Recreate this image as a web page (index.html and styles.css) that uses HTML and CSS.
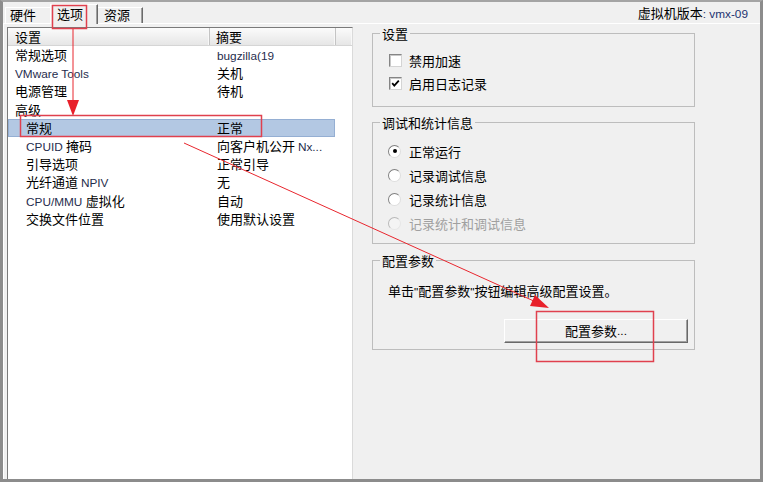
FILE: index.html
```html
<!DOCTYPE html>
<html lang="zh-CN">
<head>
<meta charset="utf-8">
<title>虚拟机设置 - 选项</title>
<link rel="stylesheet" href="styles.css">
</head>
<body>
<div class="window">
  <div class="tabbar">
    <div class="tab t1">硬件</div>
    <div class="tab sel">选项</div>
    <div class="tab t3">资源</div>
    <div class="version">虚拟机版本<span class="lat ver">: vmx-09</span></div>
  </div>
  <div class="page">
    <div class="list">
      <div class="lhead">
        <div class="hc c1">设置</div>
        <div class="hc c2">摘要</div>
        <div class="hc c3"></div>
      </div>
      <div class="row"><div class="c1 l1">常规选项</div><div class="c2"><span class="lat">bugzilla(19</span></div></div>
      <div class="row"><div class="c1 l1"><span class="lat">VMware Tools</span></div><div class="c2">关机</div></div>
      <div class="row"><div class="c1 l1">电源管理</div><div class="c2">待机</div></div>
      <div class="row"><div class="c1 l1">高级</div><div class="c2"></div></div>
      <div class="row selrow"><div class="c1 l2">常规</div><div class="c2">正常</div></div>
      <div class="row"><div class="c1 l2"><span class="lat">CPUID </span>掩码</div><div class="c2">向客户机公开 <span class="lat">Nx...</span></div></div>
      <div class="row"><div class="c1 l2">引导选项</div><div class="c2">正常引导</div></div>
      <div class="row"><div class="c1 l2">光纤通道 <span class="lat">NPIV</span></div><div class="c2">无</div></div>
      <div class="row"><div class="c1 l2"><span class="lat">CPU/MMU </span>虚拟化</div><div class="c2">自动</div></div>
      <div class="row"><div class="c1 l2">交换文件位置</div><div class="c2">使用默认设置</div></div>
    </div>
    <div class="right">
      <fieldset class="group g1">
        <legend>设置</legend>
        <div class="gbody b1">
          <div class="opt"><span class="cb"></span>禁用加速</div>
          <div class="opt"><span class="cb"><svg width="11" height="11" viewBox="0 0 11 11"><path d="M2.2 5.2 L4.3 7.6 L8.8 2.6" fill="none" stroke="#000" stroke-width="1.8"/></svg></span>启用日志记录</div>
        </div>
      </fieldset>
      <fieldset class="group g2">
        <legend>调试和统计信息</legend>
        <div class="gbody b2">
          <div class="opt"><span class="rb"><span class="dot"></span></span>正常运行</div>
          <div class="opt"><span class="rb"></span>记录调试信息</div>
          <div class="opt"><span class="rb"></span>记录统计信息</div>
          <div class="opt dis"><span class="rb"></span>记录统计和调试信息</div>
        </div>
      </fieldset>
      <fieldset class="group g3">
        <legend>配置参数</legend>
        <div class="gbody b3">
          <div class="desc">单击<span class="lat q">"</span>配置参数<span class="lat q">"</span>按钮编辑高级配置设置。</div>
          <div class="btnrow"><div class="btn">配置参数<span class="lat dots">...</span></div></div>
        </div>
      </fieldset>
    </div>
  </div>
  <svg class="annot" width="763" height="482" viewBox="0 0 763 482">
    <rect x="52.5" y="5.5" width="34" height="23" fill="none" stroke="#e0404e" stroke-width="1.5"/>
    <line x1="73" y1="29" x2="73" y2="101" stroke="#e8262e" stroke-width="1"/>
    <polygon points="67,100 79,100 73,116" fill="#e8202a"/>
    <rect x="20.5" y="115.5" width="241" height="21" fill="none" stroke="#e0404e" stroke-width="1.5"/>
    <line x1="184" y1="143" x2="536" y2="302" stroke="#e8262e" stroke-width="1"/>
    <polygon points="549,308 530,306 535,295" fill="#e8202a"/>
    <rect x="536.5" y="311.5" width="117" height="50" fill="none" stroke="#e0404e" stroke-width="1.5"/>
  </svg>
</div>
</body>
</html>
```

FILE: styles.css
```css
html, body {
  margin: 0;
  padding: 0;
}

body {
  width: 763px;
  height: 482px;
  overflow: hidden;
  font-family: "Noto Sans CJK SC", sans-serif;
  font-size: 13px;
  color: #000;
  background: #f0f0f0;
}

.window {
  position: relative;
  width: 763px;
  height: 482px;
  box-sizing: border-box;
  border: 3px solid #8c8c8c;
  border-top: 2px solid #a4a4a4;
  background: #f0f0f0;
  display: flex;
  flex-direction: column;
}

.lat {
  font-family: "Liberation Sans", sans-serif;
  font-size: 11.8px;
  color: #1f2d4d;
}

/* tabs */
.tabbar {
  height: 21px;
  flex: none;
  display: flex;
  align-items: flex-end;
  padding-left: 2px;
  position: relative;
  z-index: 1;
}

.tab {
  position: relative;
  box-sizing: border-box;
  height: 16px;
  line-height: 14px;
  border-top: 1px solid #fff;
  border-left: 1px solid #fff;
  border-right: 1px solid #6a6a6a;
  box-shadow: inset -1px 0 #a0a0a0;
  padding-left: 4px;
  background: #f0f0f0;
  white-space: nowrap;
}

.t1 {
  width: 47px;
  box-shadow: none;
  border-right: none;
}

.sel {
  z-index: 2;
  width: 48px;
  height: 20px;
  line-height: 18px;
  margin-left: -2px;
  margin-bottom: -1px;
  padding-left: 6px;
}

.t3 {
  width: 46px;
  margin-left: -1px;
  padding-left: 6px;
}

.version {
  margin-left: auto;
  margin-bottom: 2px;
  padding-right: 12px;
  line-height: 14px;
  white-space: nowrap;
}

.ver {
  color: #1d3370;
}

/* page */
.page {
  flex: 1;
  min-height: 0;
  display: flex;
  border-top: 1px solid #fff;
  border-left: 1px solid #fff;
  padding-left: 3px;
}

.list {
  width: 346px;
  flex: none;
  box-sizing: border-box;
  margin-top: 3px;
  background: #fff;
  border-left: 1px solid #7a7a7a;
  border-top: 1px solid #7a7a7a;
  border-right: 1px solid #dadada;
}

.lhead {
  display: flex;
  height: 18px;
  box-sizing: border-box;
  border-bottom: 1px solid #d5d5d5;
  background: linear-gradient(#fbfbfb, #e6e6e6);
}

.hc {
  box-sizing: border-box;
  line-height: 17px;
  border-right: 1px solid #c4c4c4;
  box-shadow: inset -1px 0 #f8f8f8;
}

.lhead .c1 {
  padding-left: 7px;
}

.lhead .c2 {
  padding-left: 6px;
}

.c1 {
  width: 202px;
  flex: none;
  box-sizing: border-box;
  white-space: nowrap;
}

.c2 {
  width: 126px;
  flex: none;
  box-sizing: border-box;
  padding-left: 7px;
  white-space: nowrap;
}

.c3 {
  flex: 1;
  border-right: none;
}

.row {
  display: flex;
  height: 18.2px;
  line-height: 18px;
}

.l1 {
  padding-left: 7px;
}

.l2 {
  padding-left: 18px;
}

.selrow {
  width: 327px;
  background: #b3c8e3;
  box-shadow: inset 0 0 0 1px #95afd3;
}

/* right side */
.right {
  flex: 1;
  padding-left: 19px;
  padding-top: 2px;
}

.group {
  width: 323px;
  box-sizing: border-box;
  margin: 0;
  padding: 0;
  min-width: 0;
  border: 1px solid #bdbdbd;
}

.group legend {
  margin-left: 7px;
  padding: 0 2px;
  line-height: 15px;
}

.g2 {
  margin-top: 8px;
}

.g3 {
  margin-top: 9px;
}

.b1 {
  padding: 8px 0 11px 16px;
}

.b1 .opt {
  height: 23px;
}

.b2 {
  padding: 9px 0 8px 15px;
}

.b2 .opt {
  height: 24px;
}

.opt {
  display: flex;
  align-items: center;
}

.cb {
  width: 13px;
  height: 13px;
  flex: none;
  box-sizing: border-box;
  background: #fff;
  border: 1px solid;
  border-color: #858585 #d4d4d4 #d4d4d4 #858585;
  box-shadow: inset 1px 1px #c8c8c8;
  margin-right: 7px;
  display: flex;
}

.rb {
  width: 13px;
  height: 13px;
  flex: none;
  box-sizing: border-box;
  border-radius: 50%;
  background: #fff;
  border: 1px solid;
  border-color: #808080 #dedede #dedede #808080;
  margin-right: 8px;
  display: flex;
  align-items: center;
  justify-content: center;
}

.dot {
  width: 4px;
  height: 4px;
  border-radius: 50%;
  background: #000;
}

.dis {
  color: #a0a0a0;
}

.dis .rb {
  border-color: #b8b8b8 #e6e6e6 #e6e6e6 #b8b8b8;
  background: #f4f4f4;
}

.b3 {
  padding: 16px 6px 6px 15px;
}

.desc {
  line-height: 14px;
  white-space: nowrap;
}

.q {
  color: #000;
}

.btnrow {
  display: flex;
  justify-content: flex-end;
  margin-top: 20px;
}

.btn {
  width: 184px;
  height: 24px;
  box-sizing: border-box;
  border: 1px solid;
  border-color: #ffffff #696969 #696969 #ffffff;
  box-shadow: inset -1px -1px #a0a0a0;
  background: #f0f0f0;
  display: flex;
  align-items: center;
  justify-content: center;
  line-height: 14px;
}

.dots {
  color: #000;
}

/* annotations drawn over the screenshot */
.annot {
  position: absolute;
  left: -3px;
  top: -2px;
  z-index: 5;
  pointer-events: none;
}
```
